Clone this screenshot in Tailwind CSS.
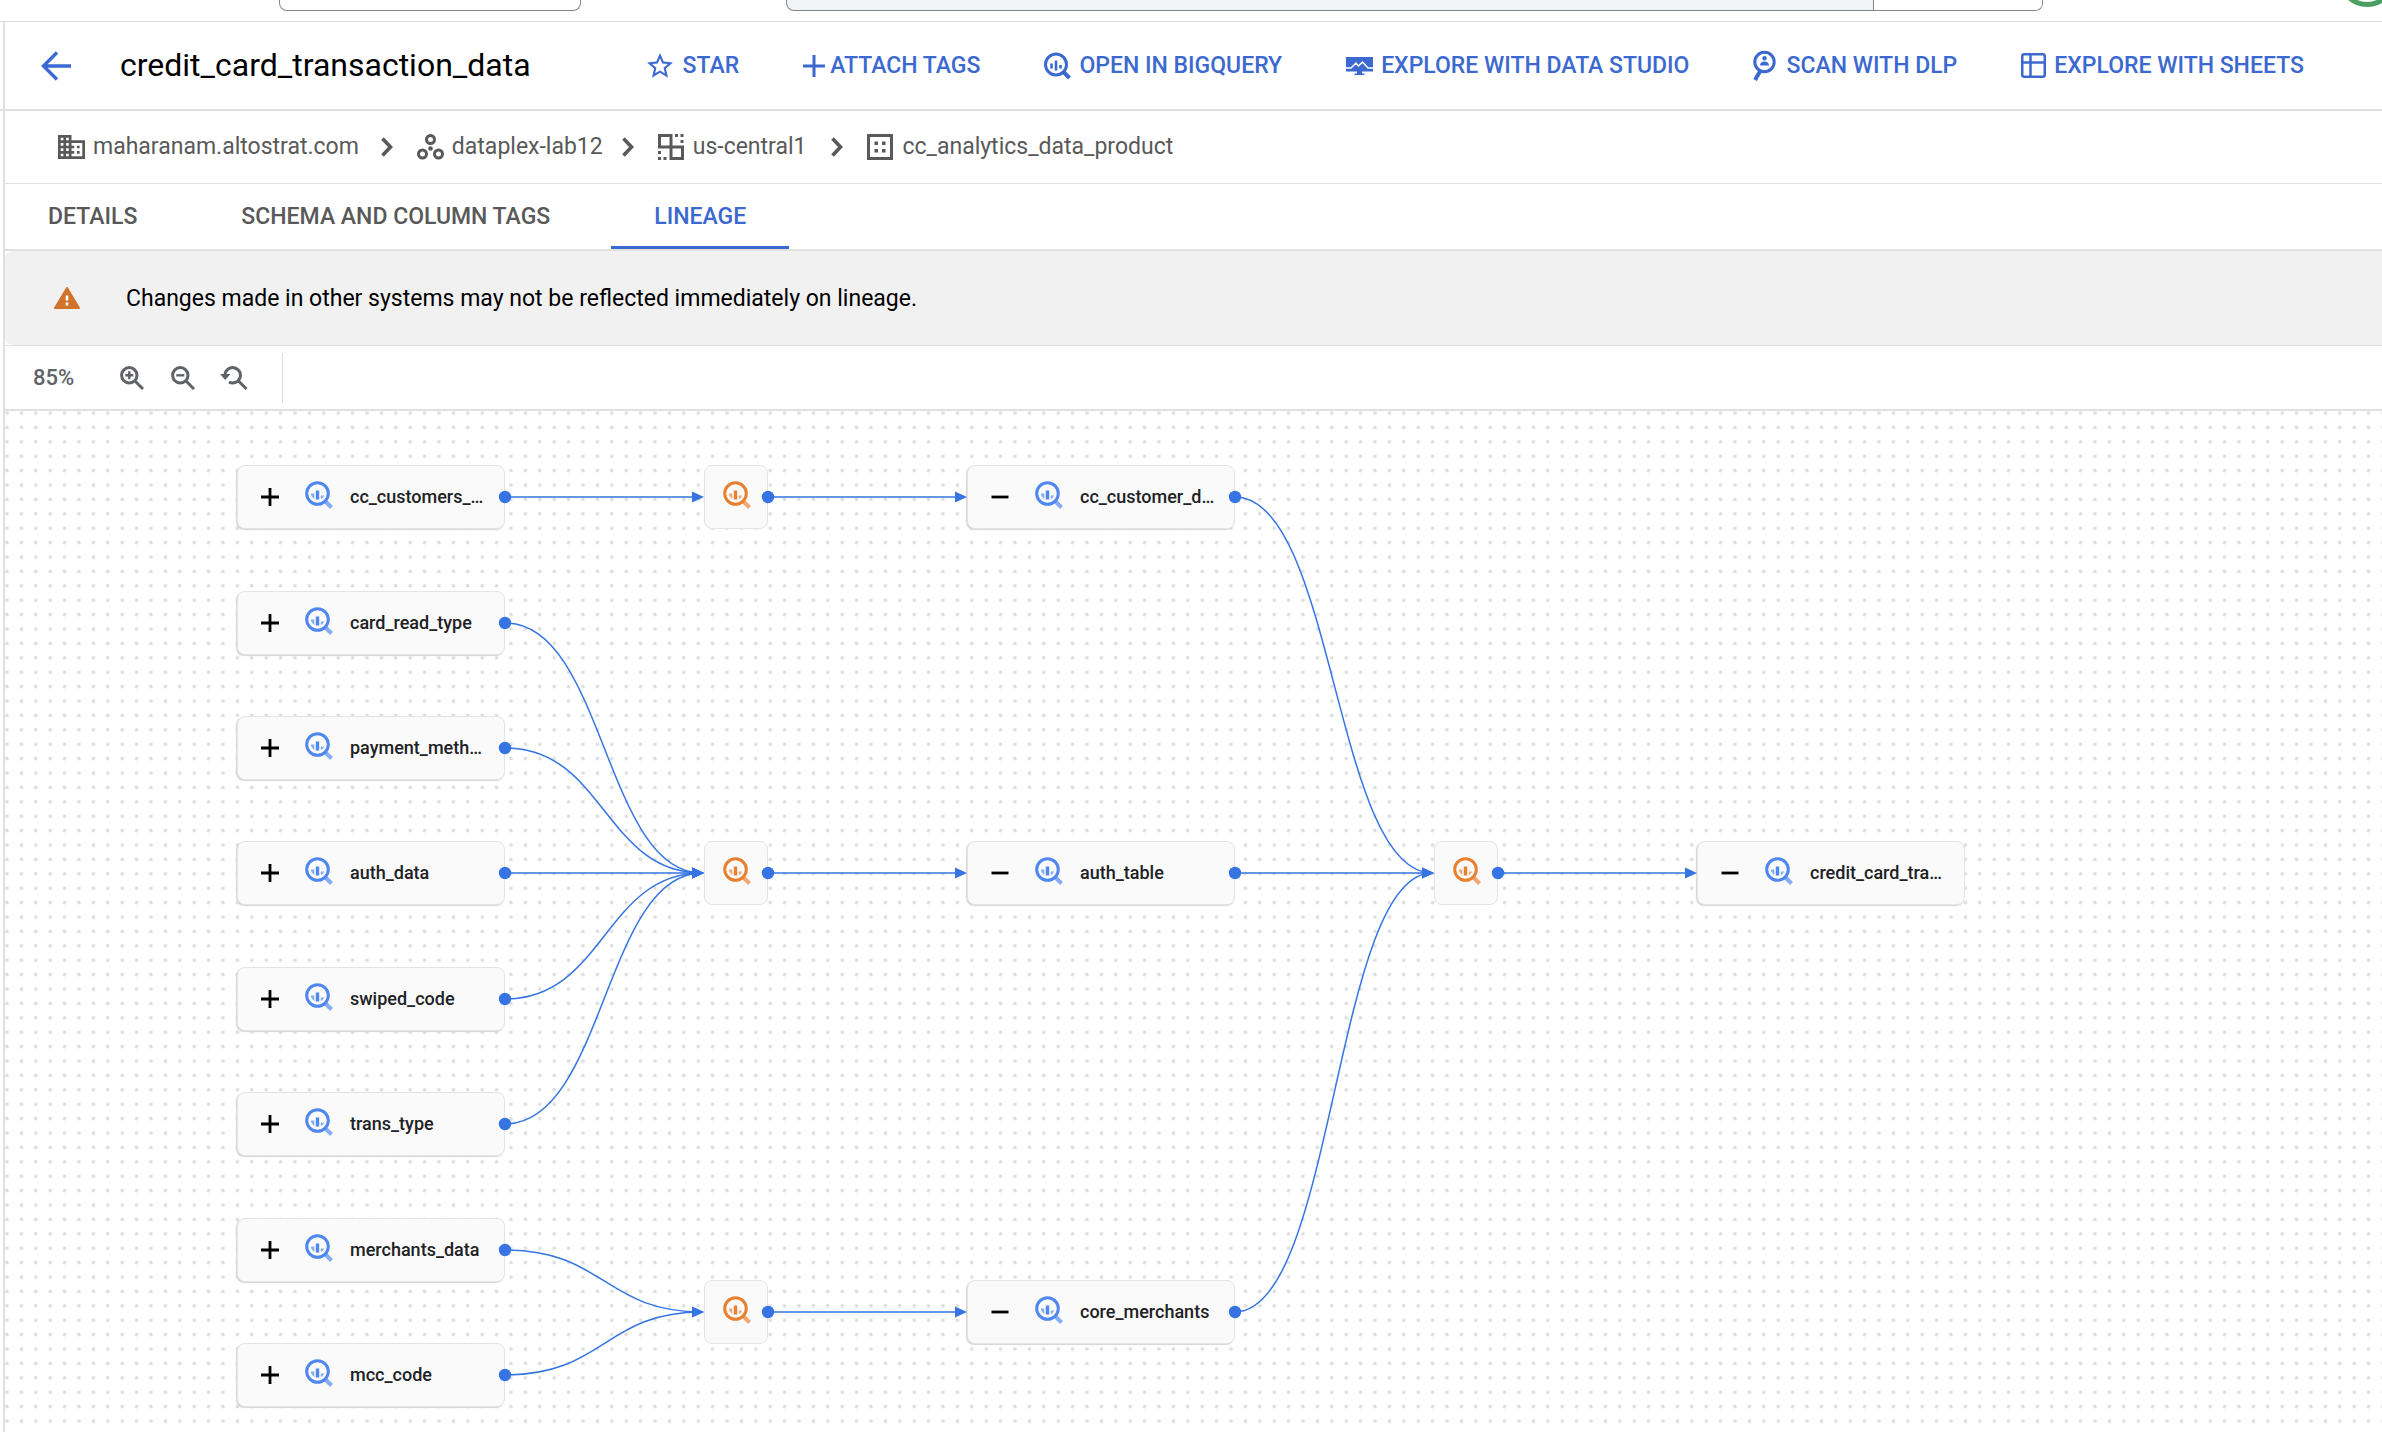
<!DOCTYPE html>
<html lang="en">
<head>
<meta charset="utf-8">
<title>credit_card_transaction_data – Lineage</title>
<script src="https://cdn.jsdelivr.net/npm/@tailwindcss/browser@4"></script>
</head>
<body class="flex min-h-screen flex-col bg-white font-[Roboto,sans-serif] text-[23px] leading-8 text-black">

<!-- Console bar -->
<div class="flex h-[22px] items-start border-b border-[#dadce0] pl-[279px]">
  <div class="h-[11px] w-[302px] shrink-0 rounded-b-lg border border-t-0 border-[#80868b]"></div>
  <div class="mr-[305px] ml-[205px] flex h-[11px] flex-1 overflow-hidden rounded-b-lg border border-t-0 border-[#80868b] bg-[#f1f3f4]">
    <div class="flex-1"></div>
    <div class="w-[169px] border-l border-[#80868b] bg-white"></div>
  </div>
  <svg class="h-[8px] w-[34px]" viewBox="0 0 34 8" fill="none"><circle cx="19" cy="-22" r="26.5" stroke="#4a9f61" stroke-width="5"/></svg>
</div>

<!-- Title and actions -->
<header class="border-b-2 border-[#e0e0e0] pl-[3px]">
  <div class="flex h-[87px] items-center border-l-2 border-[#e0e0e0] pl-9 text-[#3c69d0]">
    <button aria-label="Back" class="mr-[49px]"><svg class="h-[30px] w-[30px]" viewBox="0 0 30 30" fill="none" stroke="currentColor" stroke-width="3.4"><path d="M30 15H3M16 1.500L2.500 15L16 28.500"/></svg></button>
    <h1 class="mr-[116px] pb-0.5 text-[32px] whitespace-nowrap text-black">credit_card_transaction_data</h1>
    <div class="flex items-center gap-16 font-medium whitespace-nowrap">
      <button class="flex items-center gap-[10px]"><svg class="h-[26px] w-[26px]" viewBox="2 2 20 20" fill="currentColor"><path d="M22 9.240l-7.190-.62L12 2 9.190 8.630 2 9.240l5.460 4.730L5.820 21 12 17.270 18.180 21l-1.630-7.030L22 9.240zM12 15.400l-3.760 2.270 1-4.280-3.320-2.880 4.380-.38L12 6.100l1.710 4.040 4.380.38-3.320 2.880 1 4.280L12 15.400z"/></svg>STAR</button>
      <button class="flex items-center gap-[5px]"><svg class="h-[22px] w-[22px]" viewBox="0 0 22 22" fill="none" stroke="currentColor" stroke-width="3"><path d="M11 0v22M0 11h22"/></svg>ATTACH TAGS</button>
      <button class="flex items-center gap-[8px]"><svg class="h-[28px] w-[27px]" viewBox="0 0 27 28" fill="none" stroke="currentColor"><circle cx="12" cy="12.500" r="10.500" stroke-width="3"/><path d="M19.500 20l6 6" stroke-width="4"/><path d="M7.500 11.500v5M12 8.500v10M16.500 13v3.500" stroke-width="2.600"/></svg>OPEN IN BIGQUERY</button>
      <button class="flex items-center gap-[8px]"><svg class="h-[18px] w-[27px]" viewBox="0 0 27 18"><path fill="currentColor" d="M0 0h27v14.500h-11v2h2.500V18h-10v-1.500H11v-2H0z"/><path d="M0 11h5l5-5 2.500 3 4-4 5.500 6h5" fill="none" stroke="#fff" stroke-width="1.500"/></svg>EXPLORE WITH DATA STUDIO</button>
      <button class="flex items-center gap-[10px]"><svg class="h-[31px] w-[23px]" viewBox="0 0 23 31" fill="none" stroke="currentColor"><circle cx="11.500" cy="12" r="9.700" stroke-width="3"/><path d="M7.500 20.500L2 30" stroke-width="4"/><path fill="currentColor" stroke="none" d="M11.500 6a2.200 2.200 0 1 1 0 4.400 2.200 2.200 0 0 1 0-4.400zM7 15.500c0-2.600 2-4 4.500-4s4.500 1.400 4.500 4z"/></svg>SCAN WITH DLP</button>
      <button class="flex items-center gap-[8px]"><svg class="h-[25px] w-[25px]" viewBox="0 0 25 25" fill="none" stroke="currentColor" stroke-width="2.500"><rect x="1.250" y="1.250" width="22.500" height="22.500" rx="2"/><path d="M1 9.500h23M9.500 1v23"/></svg>EXPLORE WITH SHEETS</button>
    </div>
  </div>
</header>

<main class="ml-[3px] flex flex-1 flex-col border-l-2 border-[#e0e0e0]">
  <nav aria-label="Breadcrumb" class="flex h-[73px] items-center border-b border-[#e0e0e0] pl-[53px] whitespace-nowrap text-[#595959]">
    <a href="#" class="flex items-center gap-2"><svg class="h-[24px] w-[27px]" viewBox="2 3 20 18" preserveAspectRatio="none" fill="currentColor"><path d="M12 7V3H2v18h20V7H12zM6 19H4v-2h2v2zm0-4H4v-2h2v2zm0-4H4V9h2v2zm0-4H4V5h2v2zm4 12H8v-2h2v2zm0-4H8v-2h2v2zm0-4H8V9h2v2zm0-4H8V5h2v2zm10 12h-8v-2h2v-2h-2v-2h2v-2h-2V9h8v10zm-2-8h-2v2h2v-2zm0 4h-2v2h2v-2z"/></svg>maharanam.altostrat.com</a>
    <svg class="mr-6 ml-[22px] h-5 w-3" viewBox="0 0 12 20" fill="none" stroke="currentColor" stroke-width="3.600"><path d="M1.500 1.500L9.500 10l-8 8.500"/></svg>
    <a href="#" class="flex items-center gap-2"><svg class="h-[26px] w-[27px]" viewBox="0 0 27 26" fill="none" stroke="currentColor" stroke-width="3"><circle cx="13.500" cy="5.500" r="4"/><circle cx="5.500" cy="20" r="4"/><circle cx="21.500" cy="20" r="4"/><circle cx="13.500" cy="14.500" r="2.300" fill="currentColor" stroke="none"/></svg>dataplex-lab12</a>
    <svg class="mr-6 ml-[19px] h-5 w-3" viewBox="0 0 12 20" fill="none" stroke="currentColor" stroke-width="3.600"><path d="M1.500 1.500L9.500 10l-8 8.500"/></svg>
    <a href="#" class="flex items-center gap-[9px]"><svg class="h-[26px] w-[26px]" viewBox="0 0 26 26" fill="none" stroke="currentColor" stroke-width="3"><path d="M1.500 1.500H13V13H1.500zM13 13H24.500V24.500H13zM13 1.500V24.500M1.500 13H24.500"/><path d="M17 1.500h3M22.500 1.500h3M24 6v3M1.500 17v3M0 24.500h3M5.500 24.500h3"/></svg>us-central1</a>
    <svg class="mr-6 ml-[25px] h-5 w-3" viewBox="0 0 12 20" fill="none" stroke="currentColor" stroke-width="3.600"><path d="M1.500 1.500L9.500 10l-8 8.500"/></svg>
    <a href="#" class="flex items-center gap-[9px]"><svg class="h-[26px] w-[26px]" viewBox="0 0 26 26" fill="none" stroke="currentColor" stroke-width="3"><path d="M1.500 1.500h23v23h-23z"/><path fill="currentColor" stroke="none" d="M7.500 7.500h3.500v3.500H7.500zM15 7.500h3.500v3.500H15zM7.500 15h3.500v3.500H7.500zM15 15h3.500v3.500H15z"/></svg>cc_analytics_data_product</a>
  </nav>

  <div role="tablist" class="flex h-[67px] gap-[18px] border-b-2 border-[#e0e0e0] font-medium text-[#595959]">
    <button role="tab" class="border-b-[3px] border-transparent px-[43px] pt-1">DETAILS</button>
    <button role="tab" class="border-b-[3px] border-transparent px-[43px] pt-1">SCHEMA AND COLUMN TAGS</button>
    <button role="tab" aria-selected="true" class="border-b-[3px] border-[#3c69d0] px-[43px] pt-1 text-[#3c69d0]">LINEAGE</button>
  </div>

  <div class="border-b border-[#e0e0e0]">
    <div role="status" class="flex h-[94px] items-center gap-[46px] rounded-l-lg bg-[#f1f1f1] pl-[49px]">
      <svg class="h-[22px] w-[26px]" viewBox="0 0 26 22"><path d="M13 1L25 21H1z" fill="#d0732c" stroke="#d0732c" stroke-width="2" stroke-linejoin="round"/><path d="M13 8.500v5M13 15.500v3" stroke="#fff" stroke-width="2.600"/></svg>
      <p class="pt-0.5">Changes made in other systems may not be reflected immediately on lineage.</p>
    </div>
  </div>

  <div class="flex h-[65px] items-center border-b-2 border-[#e0e0e0] pl-[28px] text-[#5f6368]">
    <span class="w-[87px] text-[22px] font-medium">85%</span>
    <button aria-label="Zoom in" class="mr-[27px]"><svg class="h-6 w-6" viewBox="0 0 24 24" fill="none" stroke="currentColor" stroke-width="3"><circle cx="9.300" cy="9.300" r="7.700"/><path d="M15 15l8 8"/><path d="M9.300 5.300v8M5.300 9.300h8" stroke-width="2.400"/></svg></button>
    <button aria-label="Zoom out" class="mr-[25px]"><svg class="h-6 w-6" viewBox="0 0 24 24" fill="none" stroke="currentColor" stroke-width="3"><circle cx="9.300" cy="9.300" r="7.700"/><path d="M15 15l8 8"/><path d="M5.300 9.300h8" stroke-width="2.400"/></svg></button>
    <button aria-label="Reset zoom" class="mr-[34px]"><svg class="h-6 w-7" viewBox="0 0 28 24" fill="none" stroke="currentColor" stroke-width="3"><path d="M5 9.300A7.700 7.700 0 1 1 9 16"/><path d="M18.500 15l8 8"/><path d="M0 8h10.500L5.200 14z" fill="currentColor" stroke="none"/></svg></button>
    <div class="h-[50px] w-px bg-[#dadce0]"></div>
  </div>

  <!-- Lineage canvas: nodes and edges are placed from the data below -->
  <section aria-label="Lineage graph" class="relative min-h-[1021px] flex-1 overflow-hidden">
    <svg class="absolute inset-0 h-full w-full">
      <defs>
        <pattern id="grid" width="14.400" height="14.400" patternUnits="userSpaceOnUse" x="-5.200" y="-5.200"><circle cx="7.200" cy="7.200" r="1.900" fill="#dfdfdf"/></pattern>
      </defs>
      <rect width="100%" height="100%" fill="url(#grid)"/>
    </svg>
    <div id="nodes"></div>
    <svg id="edges" class="pointer-events-none absolute inset-0 h-full w-full"></svg>
  </section>
</main>

<script>
const TABLE_W = 268, PROC_W = 64;
const tables = [
  { id: 'cust', x: 232, y: 86, name: 'cc_customers_…', open: false },
  { id: 'card', x: 232, y: 212, name: 'card_read_type', open: false },
  { id: 'pay', x: 232, y: 337, name: 'payment_meth…', open: false },
  { id: 'auth', x: 232, y: 462, name: 'auth_data', open: false },
  { id: 'swipe', x: 232, y: 588, name: 'swiped_code', open: false },
  { id: 'trans', x: 232, y: 713, name: 'trans_type', open: false },
  { id: 'merch', x: 232, y: 839, name: 'merchants_data', open: false },
  { id: 'mcc', x: 232, y: 964, name: 'mcc_code', open: false },
  { id: 'custd', x: 962, y: 86, name: 'cc_customer_d…', open: true },
  { id: 'autht', x: 962, y: 462, name: 'auth_table', open: true },
  { id: 'core', x: 962, y: 901, name: 'core_merchants', open: true },
  { id: 'credit', x: 1692, y: 462, name: 'credit_card_tra…', open: true },
];
const processes = [
  { id: 'p1', x: 699, y: 86 }, { id: 'p2', x: 699, y: 462 },
  { id: 'p3', x: 699, y: 901 }, { id: 'p4', x: 1429, y: 462 },
];
const links = [
  ['cust', 'p1'], ['card', 'p2'], ['pay', 'p2'], ['auth', 'p2'], ['swipe', 'p2'], ['trans', 'p2'],
  ['merch', 'p3'], ['mcc', 'p3'], ['p1', 'custd'], ['p2', 'autht'], ['p3', 'core'],
  ['custd', 'p4'], ['autht', 'p4'], ['core', 'p4'], ['p4', 'credit'],
];
const bigQuery = (main, soft) => `<svg class="h-8 w-7 shrink-0" viewBox="0 0 28 32" fill="none">
  <path d="M20.500 20.500l6 6" stroke="${soft}" stroke-width="4"/>
  <circle cx="12.500" cy="12.500" r="10.800" stroke="${main}" stroke-width="3"/>
  <path d="M6 12.500h3.300v5.500q-2.300-1.500-3.300-4zM15.800 14.500h3.400q-1 2.500-3.400 3.500z" fill="${soft}"/>
  <path d="M10.800 9.500h3.400v9h-3.400z" fill="${main}"/></svg>`;
const sign = open => `<svg class="h-[18px] w-[22px]" viewBox="0 0 22 18" stroke="#000" stroke-width="2.800"><path d="M${open ? '2.500 9h17' : '2 9h18M11 0v18'}"/></svg>`;

document.getElementById('nodes').innerHTML =
  tables.map(n => `<div class="absolute flex h-16 w-[268px] items-center rounded-lg border border-[#e4e4e4] bg-[#fafafa] pl-[21px] shadow-[-1px_1px_1px_#d6d6d6]" style="left:${n.x}px;top:${n.y - 32}px">
    <button class="mr-6" aria-label="${n.open ? 'Collapse' : 'Expand'} ${n.name}">${sign(n.open)}</button>
    ${bigQuery('#4f87ee', '#86adf4')}
    <span class="ml-[17px] text-[18px] font-medium whitespace-nowrap text-[#202124]">${n.name}</span></div>`).join('') +
  processes.map(n => `<div class="absolute flex h-16 w-16 items-center rounded-lg border border-[#e4e4e4] bg-[#fafafa] pl-[18px]" style="left:${n.x}px;top:${n.y - 32}px">${bigQuery('#e8812f', '#f2a873')}</div>`).join('');

const at = {};
tables.forEach(n => at[n.id] = { ...n, w: TABLE_W });
processes.forEach(n => at[n.id] = { ...n, w: PROC_W });
document.getElementById('edges').innerHTML = links.map(([a, b]) => {
  const s = at[a], e = at[b], x1 = s.x + s.w, x2 = e.x, m = (x1 + x2) / 2;
  return `<path d="M${x1} ${s.y}C${m} ${s.y} ${m} ${e.y} ${x2 - 2} ${e.y}" fill="none" stroke="#3574e2" stroke-width="1.500"/>
    <path d="M${x2} ${e.y}l-12 -5.500v11z" fill="#3574e2"/><circle cx="${x1}" cy="${s.y}" r="6.200" fill="#3574e2"/>`;
}).join('');
</script>
</body>
</html>
